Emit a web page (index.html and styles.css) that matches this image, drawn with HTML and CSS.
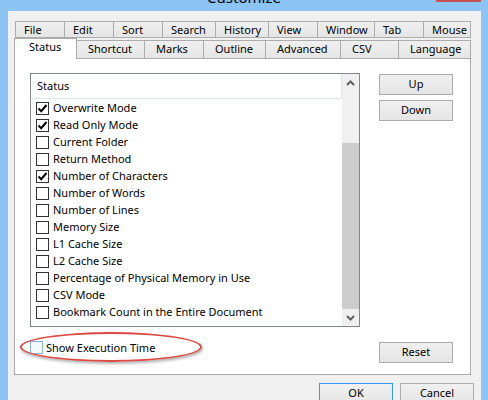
FILE: index.html
```html
<!DOCTYPE html>
<html>
<head>
<meta charset="utf-8">
<link rel="stylesheet" href="styles.css">
</head>
<body>
<div class="titlebar">
  <div class="title">Customize</div>
  <div class="close"></div>
</div>
<div class="client">
  <div class="tabs">
    <div class="tabrow row1">
      <div class="tab w49">File</div>
      <div class="tab w49">Edit</div>
      <div class="tab w49">Sort</div>
      <div class="tab w53">Search</div>
      <div class="tab w53">History</div>
      <div class="tab w49">View</div>
      <div class="tab w57">Window</div>
      <div class="tab w49">Tab</div>
      <div class="tab last w48">Mouse</div>
    </div>
    <div class="tabrow row2">
      <div class="tab selected">Status</div>
      <div class="tab noleft w67">Shortcut</div>
      <div class="tab w59">Marks</div>
      <div class="tab w62">Outline</div>
      <div class="tab w75">Advanced</div>
      <div class="tab w58">CSV</div>
      <div class="tab last w73">Language</div>
    </div>
  </div>
  <div class="panel">
    <div class="leftcol">
      <div class="listbox">
        <div class="listcontent">
          <div class="listheader">Status</div>
          <div class="items">
            <div class="item"><span class="cb checked"><svg viewBox="0 0 11 11" width="11" height="11"><path d="M1.5 5.5 L4.2 8.2 L9.5 2" fill="none" stroke="#000" stroke-width="2"/></svg></span><span>Overwrite Mode</span></div>
            <div class="item"><span class="cb checked"><svg viewBox="0 0 11 11" width="11" height="11"><path d="M1.5 5.5 L4.2 8.2 L9.5 2" fill="none" stroke="#000" stroke-width="2"/></svg></span><span>Read Only Mode</span></div>
            <div class="item"><span class="cb"></span><span>Current Folder</span></div>
            <div class="item"><span class="cb"></span><span>Return Method</span></div>
            <div class="item"><span class="cb checked"><svg viewBox="0 0 11 11" width="11" height="11"><path d="M1.5 5.5 L4.2 8.2 L9.5 2" fill="none" stroke="#000" stroke-width="2"/></svg></span><span>Number of Characters</span></div>
            <div class="item"><span class="cb"></span><span>Number of Words</span></div>
            <div class="item"><span class="cb"></span><span>Number of Lines</span></div>
            <div class="item"><span class="cb"></span><span>Memory Size</span></div>
            <div class="item"><span class="cb"></span><span>L1 Cache Size</span></div>
            <div class="item"><span class="cb"></span><span>L2 Cache Size</span></div>
            <div class="item"><span class="cb"></span><span>Percentage of Physical Memory in Use</span></div>
            <div class="item"><span class="cb"></span><span>CSV Mode</span></div>
            <div class="item"><span class="cb"></span><span>Bookmark Count in the Entire Document</span></div>
          </div>
        </div>
        <div class="scrollbar">
          <div class="sbbtn"><svg width="9" height="6" viewBox="0 0 9 6"><path d="M1 5 L4.5 1.5 L8 5" fill="none" stroke="#606060" stroke-width="2"/></svg></div>
          <div class="track"><div class="thumb"></div></div>
          <div class="sbbtn"><svg width="9" height="6" viewBox="0 0 9 6"><path d="M1 1 L4.5 4.5 L8 1" fill="none" stroke="#606060" stroke-width="2"/></svg></div>
        </div>
      </div>
      <div class="execrow"><span class="cb hot"></span><span>Show Execution Time</span></div>
    </div>
    <div class="rightcol">
      <div class="btn up">Up</div>
      <div class="btn down">Down</div>
      <div class="btn reset">Reset</div>
    </div>
  </div>
  <div class="bottombar">
    <div class="btn default">OK</div>
    <div class="btn">Cancel</div>
  </div>
</div>
<div class="annotation"></div>
</body>
</html>
```
FILE: styles.css
```css
html, body {
  margin: 0;
  padding: 0;
}
body {
  width: 488px;
  height: 400px;
  overflow: hidden;
  background: #8bc4f5;
  font-family: "Noto Sans", "Open Sans", sans-serif;
  font-size: 11px;
  color: #000;
}
.titlebar {
  height: 11px;
  overflow: hidden;
  position: relative;
}
.title {
  font-size: 15px;
  line-height: 20px;
  margin-top: -13px;
  text-align: center;
  color: #000;
}
.close {
  position: absolute;
  left: 436px;
  top: 0;
  width: 45px;
  height: 2px;
  background: #c75050;
}
.client {
  margin: 0 7px 0 8px;
  height: 389px;
  background: #f0f0f0;
  padding-top: 10px;
  box-sizing: border-box;
}
.tabs {
  margin-left: 6px;
  width: 457px;
}
.tabrow {
  display: flex;
}
.row1 {
  padding-left: 1px;
  height: 17px;
  margin-bottom: 1px;
}
.row2 {
  height: 19px;
  align-items: flex-end;
}
.tab {
  box-sizing: border-box;
  border: 1px solid #acacac;
  border-right: none;
  background: linear-gradient(#f0f0f0, #e5e5e5);
  line-height: 15px;
  padding-left: 8px;
  white-space: nowrap;
}
.row1 .tab {
  height: 17px;
}
.row2 .tab {
  height: 18px;
  border-bottom: none;
  padding-left: 11px;
  line-height: 16px;
}
.row2 .tab.selected {
  height: 21px;
  width: 63px;
  background: #fff;
  border-right: 1px solid #acacac;
  padding-left: 14px;
  line-height: 15px;
  margin-bottom: -1px;
  position: relative;
  z-index: 2;
}
.tab.last {
  border-right: 1px solid #acacac;
}
.tab.noleft {
  border-left: none;
}
.w48 { width: 48px; }
.w49 { width: 49px; }
.w53 { width: 53px; }
.w57 { width: 57px; }
.w58 { width: 58px; }
.w59 { width: 59px; }
.w62 { width: 62px; }
.w67 { width: 67px; }
.w73 { width: 73px; }
.w75 { width: 75px; }

.panel {
  margin-left: 6px;
  width: 457px;
  height: 317px;
  box-sizing: border-box;
  border: 1px solid #acacac;
  background: #fff;
  display: flex;
  padding: 14px 0 11px 15px;
  position: relative;
  z-index: 1;
}
.leftcol {
  width: 330px;
  display: flex;
  flex-direction: column;
}
.listbox {
  height: 254px;
  box-sizing: border-box;
  border: 1px solid #828790;
  display: flex;
}
.listcontent {
  width: 311px;
  display: flex;
  flex-direction: column;
  overflow: hidden;
}
.listheader {
  height: 25px;
  box-sizing: border-box;
  border-bottom: 1px solid #dde6f0;
  border-right: 1px solid #dde6f0;
  padding-left: 6px;
  line-height: 23px;
  flex: none;
}
.items {
  margin-top: 0;
}
.item {
  height: 17px;
  display: flex;
  align-items: center;
  padding-left: 5px;
  gap: 4px;
  white-space: nowrap;
}
.item .cb {
  margin-top: 1px;
}
.cb {
  width: 13px;
  height: 13px;
  box-sizing: border-box;
  border: 1px solid #333;
  background: #fff;
  flex: none;
  display: flex;
  align-items: center;
  justify-content: center;
}
.cb.hot {
  border-color: #8ab6e4;
  background: #f4f9ff;
}
.scrollbar {
  width: 17px;
  background: #f0f0f0;
  display: flex;
  flex-direction: column;
}
.sbbtn {
  height: 17px;
  flex: none;
  display: flex;
  align-items: center;
  justify-content: center;
}
.track {
  flex: 1;
}
.thumb {
  margin-top: 52px;
  height: 166px;
  background: #cdcdcd;
}
.execrow {
  margin-top: 13px;
  display: flex;
  align-items: center;
  gap: 3px;
  height: 14px;
  white-space: nowrap;
}
.rightcol {
  margin-left: 19px;
  width: 74px;
  display: flex;
  flex-direction: column;
}
.btn {
  box-sizing: border-box;
  width: 74px;
  height: 21px;
  border: 1px solid #acacac;
  background: linear-gradient(#f0f0f0, #e5e5e5);
  text-align: center;
  line-height: 18px;
}
.btn.up {
  margin-top: 1px;
}
.btn.down {
  margin-top: 5px;
}
.btn.reset {
  margin-top: auto;
}
.bottombar {
  display: flex;
  justify-content: flex-end;
  gap: 7px;
  margin-top: 8px;
  margin-right: 7px;
}
.bottombar .btn {
  height: 23px;
}
.btn.default {
  border-color: #3399ff;
}
.annotation {
  position: absolute;
  left: 20px;
  top: 332px;
  width: 182px;
  height: 30px;
  box-sizing: border-box;
  border: 2px solid #dc4a44;
  border-radius: 50%;
  box-shadow: 1px 2px 3px rgba(0, 0, 0, 0.3);
  z-index: 5;
}
```
